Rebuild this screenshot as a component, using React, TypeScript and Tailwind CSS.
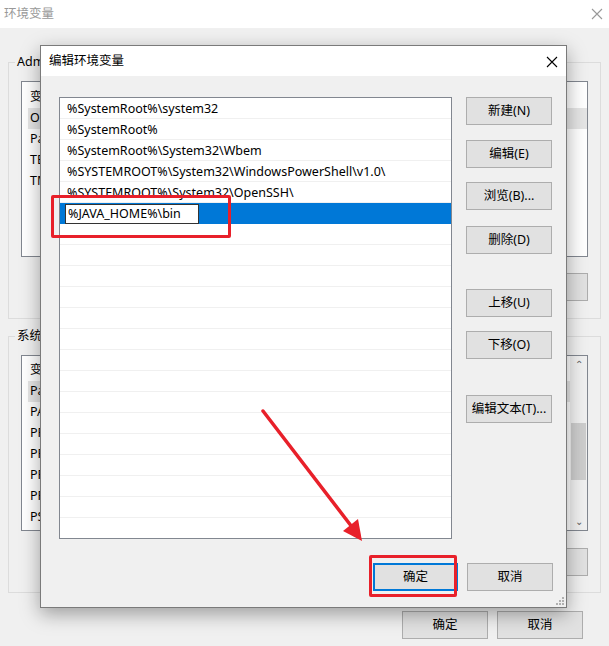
import React from 'react'

const font = "font-['Noto_Sans','Noto_Sans_CJK_SC',sans-serif]"

const paths = [
  '%SystemRoot%\\system32',
  '%SystemRoot%',
  '%SystemRoot%\\System32\\Wbem',
  '%SYSTEMROOT%\\System32\\WindowsPowerShell\\v1.0\\',
  '%SYSTEMROOT%\\System32\\OpenSSH\\',
]

function Btn({ label, className = '' }: { label: string; className?: string }) {
  return (
    <button
      className={`h-[28px] w-[86px] border border-[#adadad] bg-[#e1e1e1] text-[12.5px] text-black ${className}`}
    >
      {label}
    </button>
  )
}

function Close({ className = '' }: { className?: string }) {
  return (
    <svg width="12" height="12" viewBox="0 0 12 12" className={className}>
      <path d="M1 1L11 11M11 1L1 11" stroke="currentColor" strokeWidth="1.1" />
    </svg>
  )
}

// 뒤 창 (환경변수)
function BackWindow() {
  const userRows = ['变量', 'OneDrive', 'Path', 'TEMP', 'TMP']
  const sysRows = ['变量', 'Path', 'PATHEXT', 'PROCESSOR', 'PROCESSOR', 'PROCESSOR', 'PROCESSOR', 'PSModulePath']
  return (
    <div className="h-[646px] w-[609px] bg-[#f0f0f0]">
      <div className="flex h-[28px] items-center justify-between bg-white pl-[4px] pr-[6px]">
        <span className="text-[12.5px] text-[#999]">环境变量</span>
        <Close className="text-[#999]" />
      </div>
      <div className="px-[8px] pt-[26px]">
        <fieldset className="h-[265px] border border-[#dcdcdc] px-[12px]">
          <legend className="-ml-[6px] px-[2px] text-[12.5px] leading-[16px]">Administrator 的用户变量</legend>
          <div className="mt-[11px] h-[176px] border border-[#828790] bg-white pt-[5px] pl-[6px]">
            {userRows.map((r, i) => (
              <div
                key={i}
                className={`flex h-[21px] items-center px-[2px] text-[12.5px] ${i === 1 ? 'bg-[#e5e5e5]' : ''}`}
              >
                {r}
              </div>
            ))}
          </div>
          <div className="mt-[16px] flex justify-end gap-[8px]">
            <Btn label="新建(N)..." />
            <Btn label="编辑(E)..." />
            <Btn label="删除(D)" />
          </div>
        </fieldset>
        <fieldset className="mt-[9px] h-[265px] border border-[#dcdcdc] px-[12px]">
          <legend className="-ml-[6px] px-[2px] text-[12.5px] leading-[16px]">系统变量(S)</legend>
          <div className="mt-[11px] flex h-[176px] border border-[#828790] bg-white">
            <div className="flex-1 pt-[4px] pl-[6px]">
              {sysRows.map((r, i) => (
                <div
                  key={i}
                  className={`flex h-[21px] items-center px-[2px] text-[12.5px] ${i === 1 ? 'bg-[#e5e5e5]' : ''}`}
                >
                  {r}
                </div>
              ))}
            </div>
            <div className="flex w-[17px] flex-col items-center bg-[#f0f0f0]">
              <span className="flex h-[17px] items-center text-[10px] text-[#606060]">⌃</span>
              <div className="mt-[50px] h-[57px] w-[15px] bg-[#cdcdcd]" />
              <div className="flex-1" />
              <span className="flex h-[17px] items-center text-[10px] text-[#606060]">⌄</span>
            </div>
          </div>
          <div className="mt-[17px] flex justify-end gap-[8px]">
            <Btn label="新建(W)..." />
            <Btn label="编辑(I)..." />
            <Btn label="删除(L)" />
          </div>
        </fieldset>
        <div className="mt-[18px] flex justify-end gap-[9px] pr-[18px]">
          <Btn label="确定" />
          <Btn label="取消" />
        </div>
      </div>
    </div>
  )
}

// 편집 다이얼로그
function EditDialog() {
  const empty = Array.from({ length: 15 })
  return (
    <div className="absolute left-[40px] top-[45px] flex h-[563px] w-[527px] flex-col border border-[#7a7a7a] bg-[#f0f0f0] shadow-[0_6px_18px_rgba(0,0,0,0.35)]">
      <div className="flex h-[30px] items-center justify-between bg-white pl-[8px] pr-[8px] pt-[1px]">
        <span className="text-[12.5px] text-black">编辑环境变量</span>
        <Close className="text-black" />
      </div>
      <div className="flex flex-1 pl-[18px] pr-[14px] pt-[21px]">
        <div className="h-[442px] w-[393px] overflow-hidden border border-[#828790] bg-white">
          {paths.map((p) => (
            <div key={p} className="flex h-[21px] items-center border-b border-[#f0f0f0] pl-[7px] pt-[3px] text-[12.5px] whitespace-nowrap">
              {p}
            </div>
          ))}
          <div className="flex h-[21px] items-center bg-[#0078d7] pl-[5px] pt-[1px]">
            <div className="flex h-[20px] w-[134px] items-center border border-[#333] bg-white pl-[2px] pt-[1px] text-[12.5px] whitespace-nowrap">
              %JAVA_HOME%\bin
            </div>
          </div>
          {empty.map((_, i) => (
            <div key={i} className="h-[21px] border-b border-[#f0f0f0]" />
          ))}
        </div>
        <div className="ml-[14px] flex flex-col">
          <Btn label="新建(N)" />
          <Btn label="编辑(E)" className="mt-[15px]" />
          <Btn label="浏览(B)..." className="mt-[14px]" />
          <Btn label="删除(D)" className="mt-[16px]" />
          <Btn label="上移(U)" className="mt-[35px]" />
          <Btn label="下移(O)" className="mt-[14px]" />
          <Btn label="编辑文本(T)..." className="mt-[36px]" />
        </div>
      </div>
      <div className="relative flex justify-end gap-[9px] pb-[16px] pr-[13px]">
        <button className="h-[28px] w-[85px] border-2 border-[#0078d7] bg-[#e1e1e1] text-[12.5px]">确定</button>
        <Btn label="取消" />
        <svg width="8" height="8" viewBox="0 0 8 8" className="absolute bottom-[2px] right-[2px]">
          <g fill="#b0b0b0">
            <rect x="6" y="0" width="2" height="2" />
            <rect x="3" y="3" width="2" height="2" />
            <rect x="6" y="3" width="2" height="2" />
            <rect x="0" y="6" width="2" height="2" />
            <rect x="3" y="6" width="2" height="2" />
            <rect x="6" y="6" width="2" height="2" />
          </g>
        </svg>
      </div>
    </div>
  )
}

export default function App() {
  return (
    <div className={`relative h-[646px] w-[609px] overflow-hidden text-black ${font}`}>
      <BackWindow />
      <EditDialog />

      {/* 빨간 표시 */}
      <div className="absolute left-[51px] top-[195px] h-[43px] w-[180px] rounded-[2px] border-[3px] border-[#e8202a]" />
      <div className="absolute left-[369px] top-[555px] h-[42px] w-[88px] rounded-[2px] border-[3px] border-[#e8202a]" />
      <svg width="609" height="646" className="pointer-events-none absolute left-0 top-0">
        <line x1="263" y1="411" x2="352" y2="527" stroke="#e8202a" strokeWidth="3.5" strokeLinecap="round" />
        <polygon points="362,541 343,531 358,519" fill="#e8202a" />
      </svg>
    </div>
  )
}
